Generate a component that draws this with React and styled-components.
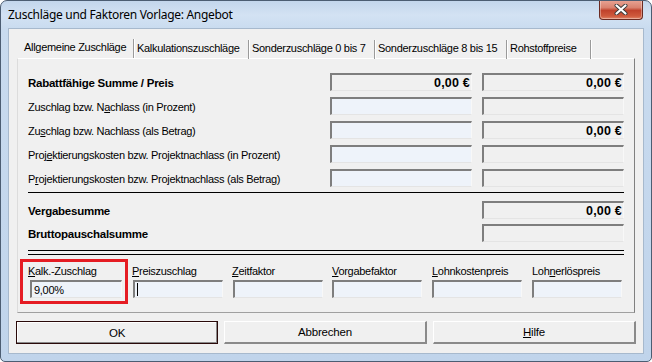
import React from "react";
import styled, { createGlobalStyle } from "styled-components";

const GlobalStyle = createGlobalStyle`
  html, body { margin: 0; padding: 0; background: #ffffff; }
  body { width: 652px; height: 362px; overflow: hidden; }
  * { box-sizing: border-box; }
`;

const UI_FONT = `"Liberation Sans", Arial, sans-serif`;

const Window = styled.div`
  width: 652px;
  height: 362px;
  border: 1px solid #4c5d72;
  border-radius: 7px 7px 5px 5px;
  background: linear-gradient(180deg, #c3d6ec 0px, #d3e2f3 14px, #c9dbef 28px, #c0d4eb 100%);
  display: flex;
  flex-direction: column;
  overflow: hidden;
  font-family: ${UI_FONT};
`;

const TitleBar = styled.div`
  height: 27px;
  display: flex;
  align-items: flex-start;
  padding-left: 7px;
`;

const Title = styled.div`
  font-family: "Noto Sans", "Liberation Sans", sans-serif;
  font-size: 12px;
  line-height: 16px;
  letter-spacing: -0.3px;
  padding-top: 6px;
  color: #000;
`;

const CloseButton = styled.div`
  margin-left: auto;
  margin-right: 8px;
  margin-top: -1px;
  width: 44px;
  height: 20px;
  border: 1px solid #6b2b22;
  border-top: none;
  border-radius: 0 0 4px 4px;
  background: linear-gradient(180deg, #e9a596 0%, #d9826f 40%, #c0422c 55%, #cf5a3d 85%, #e0866a 100%);
  box-shadow: inset 0 0 0 1px rgba(255, 255, 255, 0.35);
  display: flex;
  align-items: center;
  justify-content: center;
`;

const Client = styled.div`
  flex: 1;
  margin: 0 7px 7px 7px;
  background: #f0f0f0;
  border: 1px solid #a7b9cd;
  display: flex;
  flex-direction: column;
  padding: 9px 8px 0 8px;
  font-size: 11px;
  letter-spacing: -0.3px;
  color: #000;
`;

const TabStrip = styled.div`
  display: flex;
  height: 20px;
`;

const Tab = styled.div`
  width: ${(p) => p.$w}px;
  margin-top: 2px;
  height: 19px;
  padding-left: ${(p) => (p.$active ? 7 : 3)}px;
  line-height: 17px;
  border-right: 1px solid #9a9a9a;
  box-shadow: 1px 0 0 #ffffff;
  white-space: nowrap;
  position: relative;
  top: ${(p) => (p.$active ? -1 : 0)}px;
`;

const Panel = styled.div`
  height: 255px;
  border-top: 1px solid #ffffff;
  border-left: 1px solid #dcdcdc;
  border-right: 1px solid #808080;
  border-bottom: 1px solid #a0a0a0;
  padding: 14px 10px 0 10px;
  display: flex;
  flex-direction: column;
`;

const SumGrid = styled.div`
  display: grid;
  grid-template-columns: 1fr 142px 142px;
  grid-auto-rows: 18px;
  column-gap: 10px;
  row-gap: ${(p) => p.$gap}px;
  margin-top: ${(p) => p.$mt || 0}px;
`;

const Label = styled.div`
  align-self: center;
  white-space: nowrap;
  font-weight: ${(p) => (p.$bold ? 700 : 400)};
  font-size: ${(p) => (p.$bold ? 11.5 : 11)}px;
  letter-spacing: ${(p) => (p.$bold ? -0.25 : -0.3)}px;
  padding-top: 1px;
`;

const Field = styled.div`
  height: 18px;
  background: ${(p) => (p.$input ? "#eef3fa" : "#f0f0f0")};
  border-top: 2px solid #7e7e7e;
  border-left: 2px solid #7e7e7e;
  border-right: 1px solid #f8f8f8;
  border-bottom: 1px solid #e4e4e4;
  display: flex;
  align-items: center;
  justify-content: ${(p) => (p.$right ? "flex-end" : "flex-start")};
  padding: 0 1px 0 2px;
  font-size: 11px;
  position: relative;
`;

const Amount = styled.span`
  font-family: "Liberation Sans", Arial, sans-serif;
  font-weight: 700;
  font-size: 12.5px;
  letter-spacing: 0.2px;
`;

const Rule = styled.div`
  height: 1px;
  background: #000;
  margin-top: ${(p) => p.$mt}px;
`;

const DoubleRule = styled.div`
  height: 5px;
  border-top: 1px solid #000;
  border-bottom: 1px solid #000;
  margin-top: 8px;
`;

const FactorGrid = styled.div`
  display: grid;
  grid-template-columns: 104px repeat(5, 100px);
  margin-top: 10px;
`;

const FactorCell = styled.div`
  display: flex;
  flex-direction: column;
  gap: 2px;
  position: relative;
`;

const FactorLabel = styled.div`
  line-height: 13px;
  white-space: nowrap;
`;

const FactorField = styled(Field)`
  width: ${(p) => p.$w || 90}px;
  margin-left: ${(p) => p.$ml || 0}px;
`;

const Highlight = styled.div`
  position: absolute;
  left: -8px;
  top: -6px;
  width: 108px;
  height: 45px;
  border: 3px solid #e51c23;
  pointer-events: none;
`;

const Caret = styled.span`
  width: 1px;
  height: 13px;
  background: #000;
`;

const Key = styled.span`
  text-decoration: underline;
  text-underline-offset: 1px;
`;

const ButtonRow = styled.div`
  display: flex;
  gap: 6px;
  margin: 8px -1px 0 -1px;
`;

const Button = styled.div`
  flex: 1;
  height: 23px;
  background: #f0f0f0;
  border-top: 1px solid #ffffff;
  border-left: 1px solid #ffffff;
  border-right: 2px solid #8a8a8a;
  border-bottom: 2px solid #8a8a8a;
  display: flex;
  align-items: center;
  justify-content: center;
  font-size: 11.5px;
  letter-spacing: -0.2px;
  ${(p) =>
    p.$default &&
    `
    border: 1px solid #2a0a0a;
    box-shadow: inset -1px -1px 0 #8a8a8a, inset 1px 1px 0 #ffffff;
  `}
`;

const rows = [
  { label: "Rabattfähige Summe / Preis", bold: true, a: { value: true }, b: { value: true } },
  { label: <>Zuschlag bzw. N<Key>a</Key>chlass (in Prozent)</>, a: { input: true }, b: {} },
  { label: <>Zu<Key>s</Key>chlag bzw. Nachlass (als Betrag)</>, a: { input: true }, b: { value: true } },
  { label: <>Proj<Key>e</Key>ktierungskosten bzw. Projektnachlass (in Prozent)</>, a: { input: true }, b: {} },
  { label: <>P<Key>r</Key>ojektierungskosten bzw. Projektnachlass (als Betrag)</>, a: { input: true }, b: {} },
];

const tabs = [
  { label: "Allgemeine Zuschläge", w: 117, active: true },
  { label: "Kalkulationszuschläge", w: 115 },
  { label: "Sonderzuschläge 0 bis 7", w: 126 },
  { label: "Sonderzuschläge 8 bis 15", w: 132 },
  { label: "Rohstoffpreise", w: 84 },
];

const factors = [
  { label: <><Key>K</Key>alk.-Zuschlag</>, value: "9,00%", w: 92, ml: 2, highlight: true },
  { label: <><Key>P</Key>reiszuschlag</>, caret: true, ml: 1 },
  { label: <><Key>Z</Key>eitfaktor</>, ml: 1 },
  { label: <><Key>V</Key>orgabefaktor</> },
  { label: <><Key>L</Key>ohnkostenpreis</> },
  { label: <>Loh<Key>n</Key>erlöspreis</> },
];

function AmountField({ spec }) {
  return (
    <Field $input={spec.input} $right>
      {spec.value && <Amount>0,00 €</Amount>}
    </Field>
  );
}

export default function App() {
  return (
    <>
      <GlobalStyle />
      <Window>
        <TitleBar>
          <Title>Zuschläge und Faktoren Vorlage: Angebot</Title>
          <CloseButton>
            <svg width="14" height="11" viewBox="0 0 14 11">
              <path d="M2.5 1.5 L11.5 9.5 M11.5 1.5 L2.5 9.5" stroke="#3a3a3a" strokeWidth="4" strokeLinecap="round" />
              <path d="M2.5 1.5 L11.5 9.5 M11.5 1.5 L2.5 9.5" stroke="#ffffff" strokeWidth="2.2" strokeLinecap="round" />
            </svg>
          </CloseButton>
        </TitleBar>
        <Client>
          <TabStrip>
            {tabs.map((t) => (
              <Tab key={t.label} $w={t.w} $active={t.active}>
                {t.label}
              </Tab>
            ))}
          </TabStrip>
          <Panel>
            <SumGrid $gap={6}>
              {rows.map((r, i) => (
                <React.Fragment key={i}>
                  <Label $bold={r.bold}>{r.label}</Label>
                  <AmountField spec={r.a} />
                  <AmountField spec={r.b} />
                </React.Fragment>
              ))}
            </SumGrid>
            <Rule $mt={5} />
            <SumGrid $gap={5} $mt={8}>
              <Label $bold>Vergabesumme</Label>
              <span />
              <AmountField spec={{ value: true }} />
              <Label $bold>Bruttopauschalsumme</Label>
              <span />
              <AmountField spec={{}} />
            </SumGrid>
            <DoubleRule />
            <FactorGrid>
              {factors.map((f, i) => (
                <FactorCell key={i}>
                  <FactorLabel>{f.label}</FactorLabel>
                  <FactorField $input $w={f.w} $ml={f.ml}>
                    {f.value}
                    {f.caret && <Caret />}
                  </FactorField>
                  {f.highlight && <Highlight />}
                </FactorCell>
              ))}
            </FactorGrid>
          </Panel>
          <ButtonRow>
            <Button $default>OK</Button>
            <Button>Abbrechen</Button>
            <Button>
              <span>
                <Key>H</Key>ilfe
              </span>
            </Button>
          </ButtonRow>
        </Client>
      </Window>
    </>
  );
}
